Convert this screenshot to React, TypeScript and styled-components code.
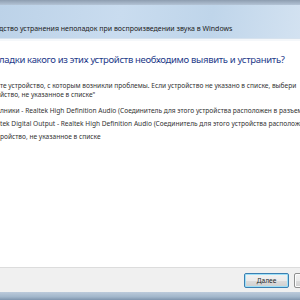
import styled, { createGlobalStyle } from "styled-components";

const Global = createGlobalStyle`
  html, body {
    margin: 0;
    padding: 0;
    width: 300px;
    height: 300px;
    overflow: hidden;
    background: #fff;
  }
`;

const Window = styled.div`
  display: flex;
  flex-direction: column;
  width: 300px;
  height: 300px;
  overflow: hidden;
  font-family: "Noto Sans", "DejaVu Sans", sans-serif;
`;

const FrameTop = styled.div`
  height: 5px;
  background: linear-gradient(#8d9db0, #b4c4d6);
`;

const TitleBar = styled.div`
  height: 34px;
  display: flex;
  align-items: flex-end;
  padding: 0 0 5px 0;
  background: linear-gradient(100deg, #bcd2e8 0%, #c9dcef 40%, #bfd5ea 70%, #d3e2f1 100%);
  border-bottom: 1px solid #d6e2ee;
  box-sizing: border-box;
`;

const TitleText = styled.div`
  font-size: 7px;
  color: #1b1b1b;
  white-space: nowrap;
  margin-left: -1px;
`;

const Content = styled.div`
  flex: 1;
  min-width: 0;
  background: #fff;
  display: flex;
  flex-direction: column;
  padding-top: 12px;
  border-top: 2px solid #f4f7fa;
  overflow: hidden;
`;

const Heading = styled.div`
  font-size: 9.5px;
  letter-spacing: -0.32px;
  color: #1d3a8a;
  white-space: nowrap;
  margin-bottom: 15px;
  margin-left: -1px;
`;

const Paragraph = styled.div`
  font-size: 6.6px;
  color: #333;
  line-height: 9px;
  white-space: nowrap;
  margin-bottom: 7px;
`;

const List = styled.div`
  display: flex;
  flex-direction: column;
  gap: 4px;
`;

const Option = styled.div`
  font-size: 6.6px;
  line-height: 9px;
  color: #333;
  white-space: nowrap;
`;

const Footer = styled.div`
  height: 24px;
  background: #f0f0f0;
  border-top: 1px solid #dcdcdc;
  display: flex;
  align-items: center;
  justify-content: flex-start;
  gap: 5px;
  padding-left: 244px;
  overflow: hidden;
`;

const Button = styled.button<{ $primary?: boolean }>`
  height: 15px;
  width: ${(p) => (p.$primary ? "45px" : "40px")};
  flex-shrink: 0;
  padding: 0;
  font-family: inherit;
  font-size: 6.6px;
  color: #222;
  border-radius: 2px;
  border: 1px solid ${(p) => (p.$primary ? "#3c7fb1" : "#8e8f8f")};
  background: linear-gradient(#f2f2f2 0%, #ebebeb 50%, #dddddd 51%, #cfcfcf 100%);
  box-shadow: ${(p) => (p.$primary ? "inset 0 0 0 1px #9de0f8" : "inset 0 0 0 1px #fcfcfc")};
`;

const FrameBottom = styled.div`
  height: 8px;
  background: linear-gradient(#bccbdb, #a2b6cb 60%, #7f95ad);
`;

export default function App() {
  return (
    <>
      <Global />
      <Window>
        <FrameTop />
        <TitleBar>
          <TitleText>дство устранения неполадок при воспроизведении звука в Windows</TitleText>
        </TitleBar>
        <Content>
          <Heading>ладки какого из этих устройств необходимо выявить и устранить?</Heading>
          <Paragraph>
            те устройство, с которым возникли проблемы. Если устройство не указано в списке, выбери
            <br />
            йство, не указанное в списке"
          </Paragraph>
          <List>
            <Option>лники - Realtek High Definition Audio (Соединитель для этого устройства расположен в разъем</Option>
            <Option>tek Digital Output - Realtek High Definition Audio (Соединитель для этого устройства расположен</Option>
            <Option>ройство, не указанное в списке</Option>
          </List>
        </Content>
        <Footer>
          <Button $primary>Далее</Button>
          <Button />
        </Footer>
        <FrameBottom />
      </Window>
    </>
  );
}
